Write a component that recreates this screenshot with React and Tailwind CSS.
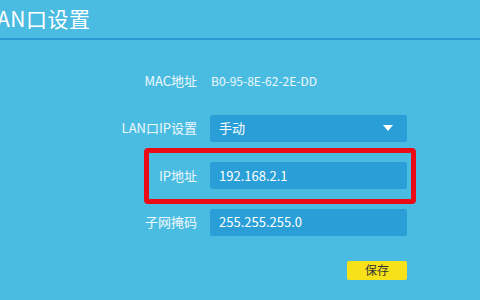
import React from "react";

const font = { fontFamily: '"Noto Sans CJK SC", "Noto Sans", sans-serif' };

const Row = ({ label, children }) => (
    <div className="flex items-center">
        <div className="w-[210px] shrink-0 pr-[13px] text-right text-[13px] text-white/90 whitespace-nowrap">{label}</div>
        {children}
    </div>
);

const Field = ({ children }) => (
    <div className="w-[197px] shrink-0 h-[27px] bg-[#2a9fd7] rounded-[2px] flex items-center px-[9px] text-[13px] text-white">
        {children}
    </div>
);

export default function App() {
    return (
        <div className="w-[480px] h-[300px] bg-[#4bbce1] overflow-hidden" style={font}>
            <div className="h-[40px] flex items-center border-b-2 border-[#2c9bd3]">
                <h1 className="ml-[-15px] text-[21px] text-white tracking-[0.5px] whitespace-nowrap">LAN口设置</h1>
            </div>
            <div className="pt-[31px]">
                <Row label="MAC地址">
                    <span className="text-[12px] text-white/90 pl-[1px]">B0-95-8E-62-2E-DD</span>
                </Row>
                <div className="mt-[24px]">
                    <Row label="LAN口IP设置">
                        <Field>
                            <span className="flex-1">手动</span>
                            <svg width="10" height="6" viewBox="0 0 10 6" className="mr-[5px]">
                                <path d="M0 0 L10 0 L5 6 Z" fill="white" />
                            </svg>
                        </Field>
                    </Row>
                </div>
                <div className="ml-[144px] mt-[6px] w-[272px] h-[56px] border-[5px] border-[#ea0b14] rounded-[4px] flex items-center">
                    <div className="w-[61px] shrink-0 pr-[13px] text-right text-[13px] text-white/90 whitespace-nowrap">IP地址</div>
                    <Field>192.168.2.1</Field>
                </div>
                <div className="mt-[5px]">
                    <Row label="子网掩码">
                        <Field>255.255.255.0</Field>
                    </Row>
                </div>
                <div className="flex justify-end w-[407px] mt-[25px]">
                    <button className="w-[60px] h-[19px] bg-[#f7e21a] rounded-[2px] text-[12px] text-[#333] leading-none">保存</button>
                </div>
            </div>
        </div>
    );
}
